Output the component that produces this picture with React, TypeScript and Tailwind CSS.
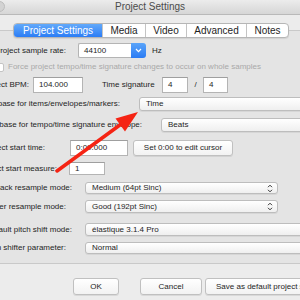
import React from "react";

function Label({ w, children }: { w: string; children: React.ReactNode }) {
  return (
    <div className={`${w} shrink-0 flex justify-end overflow-hidden`}>
      <span className="whitespace-nowrap shrink-0 text-[#1e1e1e]">{children}</span>
    </div>
  );
}

function UpDown() {
  return (
    <svg width="6" height="9" viewBox="0 0 6 9" className="shrink-0">
      <path d="M1 3.2 L3 1.2 L5 3.2" fill="none" stroke="#333" strokeWidth="1" />
      <path d="M1 5.8 L3 7.8 L5 5.8" fill="none" stroke="#333" strokeWidth="1" />
    </svg>
  );
}

function Popup({ cls, text, arrow }: { cls: string; text: string; arrow?: boolean }) {
  return (
    <div
      className={`${cls} shrink-0 h-full flex items-center justify-between pl-[6px] pr-[4px] bg-linear-to-b from-white to-[#efefef] border border-[#bdbdbd] rounded-[3px] shadow-[0_1px_0_rgba(0,0,0,0.06)]`}
    >
      <span className="whitespace-nowrap text-[#1e1e1e]">{text}</span>
      {arrow && <UpDown />}
    </div>
  );
}

function Input({ cls, text }: { cls: string; text: string }) {
  return (
    <div
      className={`${cls} shrink-0 h-full flex items-center pl-[5px] bg-white border border-[#b4b4b4] border-t-[#9f9f9f]`}
    >
      <span className="whitespace-nowrap text-[#1e1e1e]">{text}</span>
    </div>
  );
}

function Btn({ cls, text }: { cls: string; text: string }) {
  return (
    <div
      className={`${cls} shrink-0 h-full flex items-center justify-center bg-linear-to-b from-white to-[#f2f2f2] border border-[#c0c0c0] rounded-[3px] shadow-[0_1px_0_rgba(0,0,0,0.08)]`}
    >
      <span className="whitespace-nowrap text-[#1e1e1e]">{text}</span>
    </div>
  );
}

export default function App() {
  return (
    <div
      className="relative w-[300px] h-[300px] overflow-hidden bg-[#ececec] text-[8px] leading-none"
      style={{ fontFamily: '"Liberation Sans", Arial, sans-serif' }}
    >
      {/* title bar */}
      <div className="relative h-[15px] bg-linear-to-b from-[#ececec] to-[#d6d6d6] border-b border-[#b9b9b9] flex items-center justify-center">
        <span className="text-[10px] text-[#4b4b4b]">Project Settings</span>
        <div className="absolute left-[-6px] top-[1px] w-[11px] h-[11px] rounded-full bg-[#d3d3d3] border border-[#bdbdbd]" />
      </div>

      {/* tabs */}
      <div className="relative z-10 mt-[8px] ml-[13px] w-[276px] h-[15px] flex bg-white border border-[#b6b6b6] rounded-[4px] overflow-hidden shadow-[0_1px_1px_rgba(0,0,0,0.08)] text-[10px]">
        <div className="w-[88px] shrink-0 flex items-center justify-center bg-linear-to-b from-[#62a9fa] to-[#2a7cf5] text-white">
          Project Settings
        </div>
        <div className="w-[43px] shrink-0 flex items-center justify-center border-l border-[#c4c4c4] text-[#1e1e1e]">
          Media
        </div>
        <div className="w-[41px] shrink-0 flex items-center justify-center border-l border-[#c4c4c4] text-[#1e1e1e]">
          Video
        </div>
        <div className="w-[60px] shrink-0 flex items-center justify-center border-l border-[#c4c4c4] text-[#1e1e1e]">
          Advanced
        </div>
        <div className="flex-1 flex items-center justify-center border-l border-[#c4c4c4] text-[#1e1e1e]">
          Notes
        </div>
      </div>

      {/* panel */}
      <div className="mt-[-8px] w-full bg-[#e4e4e4] border-y border-[#c9c9c9] flex flex-col pb-[9px]">
        {/* sample rate */}
        <div className="mt-[12px] h-[15px] flex items-center">
          <Label w="w-[66px]">Project sample rate:</Label>
          <div className="ml-[12px] w-[68px] h-full shrink-0 flex">
            <div className="flex-1 flex items-center pl-[5px] bg-white border border-[#b4b4b4] border-r-0 rounded-l-[2px]">
              <span className="text-[#1e1e1e]">44100</span>
            </div>
            <div className="w-[15px] shrink-0 flex items-center justify-center bg-linear-to-b from-[#5aa4f9] to-[#2a7bf4] rounded-r-[3px]">
              <svg width="7" height="5" viewBox="0 0 7 5">
                <path d="M1 1 L3.5 3.6 L6 1" fill="none" stroke="white" strokeWidth="1.2" />
              </svg>
            </div>
          </div>
          <span className="ml-[6px] shrink-0 text-[#1e1e1e]">Hz</span>
        </div>

        {/* checkbox */}
        <div className="mt-[4px] h-[10px] flex items-center">
          <div className="ml-[-5px] w-[9px] h-[9px] shrink-0 bg-white border border-[#c4c4c4] rounded-[2px]" />
          <span className="ml-[4px] whitespace-nowrap shrink-0 text-[#a9a9a9]">
            Force project tempo/time signature changes to occur on whole samples
          </span>
        </div>

        {/* BPM */}
        <div className="mt-[5px] h-[16px] flex items-center">
          <Label w="w-[29px]">Project BPM:</Label>
          <Input cls="ml-[4px] w-[50px]" text="104.000" />
          <span className="ml-[19px] w-[60px] shrink-0 whitespace-nowrap text-[#1e1e1e]">Time signature</span>
          <Input cls="w-[26px]" text="4" />
          <span className="w-[15px] shrink-0 text-center text-[#1e1e1e]">/</span>
          <Input cls="w-[25px]" text="4" />
        </div>

        {/* timebase items */}
        <div className="mt-[4px] h-[14px] flex items-center">
          <Label w="w-[120px]">Timebase for items/envelopes/markers:</Label>
          <Popup cls="ml-[19px] w-[180px]" text="Time" />
        </div>

        {/* timebase tempo */}
        <div className="mt-[7px] h-[14px] flex items-center">
          <Label w="w-[142px]">Timebase for tempo/time signature envelope:</Label>
          <Popup cls="ml-[19px] w-[160px]" text="Beats" />
        </div>

        {/* start time */}
        <div className="mt-[8px] h-[16px] flex items-center">
          <Label w="w-[45px]">Project start time:</Label>
          <Input cls="ml-[25px] w-[58px]" text="0:00.000" />
          <Btn cls="ml-[5px] w-[100px]" text="Set 0:00 to edit cursor" />
        </div>

        {/* start measure */}
        <div className="mt-[6px] h-[13px] flex items-center">
          <Label w="w-[57px]">Project start measure:</Label>
          <Input cls="ml-[12px] w-[36px]" text="1" />
        </div>

        {/* playback resample */}
        <div className="mt-[7px] h-[12px] flex items-center">
          <Label w="w-[72px]">Playback resample mode:</Label>
          <Popup cls="ml-[13px] w-[193px]" text="Medium (64pt Sinc)" arrow />
        </div>

        {/* render resample */}
        <div className="mt-[6px] h-[13px] flex items-center">
          <Label w="w-[66px]">Render resample mode:</Label>
          <Popup cls="ml-[19px] w-[193px]" text="Good (192pt Sinc)" arrow />
        </div>

        {/* pitch shift mode */}
        <div className="mt-[10px] h-[13px] flex items-center">
          <Label w="w-[72px]">Default pitch shift mode:</Label>
          <Popup cls="ml-[13px] w-[230px]" text="élastique 3.1.4 Pro" />
        </div>

        {/* shifter parameter */}
        <div className="mt-[6px] h-[12px] flex items-center">
          <Label w="w-[66px]">Pitch shifter parameter:</Label>
          <Popup cls="ml-[19px] w-[230px]" text="Normal" />
        </div>
      </div>

      {/* buttons */}
      <div className="mt-[14px] h-[17px] flex items-center">
        <Btn cls="ml-[73px] w-[46px]" text="OK" />
        <Btn cls="ml-[21px] w-[62px]" text="Cancel" />
        <Btn cls="ml-[3px] w-[130px] justify-start! pl-[10px]" text="Save as default project settings" />
      </div>

      {/* red annotation arrow */}
      <svg className="absolute inset-0 z-20 pointer-events-none" width="300" height="300" viewBox="0 0 300 300">
        <line x1="57" y1="171" x2="124" y2="122" stroke="#f52414" strokeWidth="3.5" strokeLinecap="round" />
        <polygon points="138,112 125,131.5 115.5,118.5" fill="#f52414" />
      </svg>
    </div>
  );
}
